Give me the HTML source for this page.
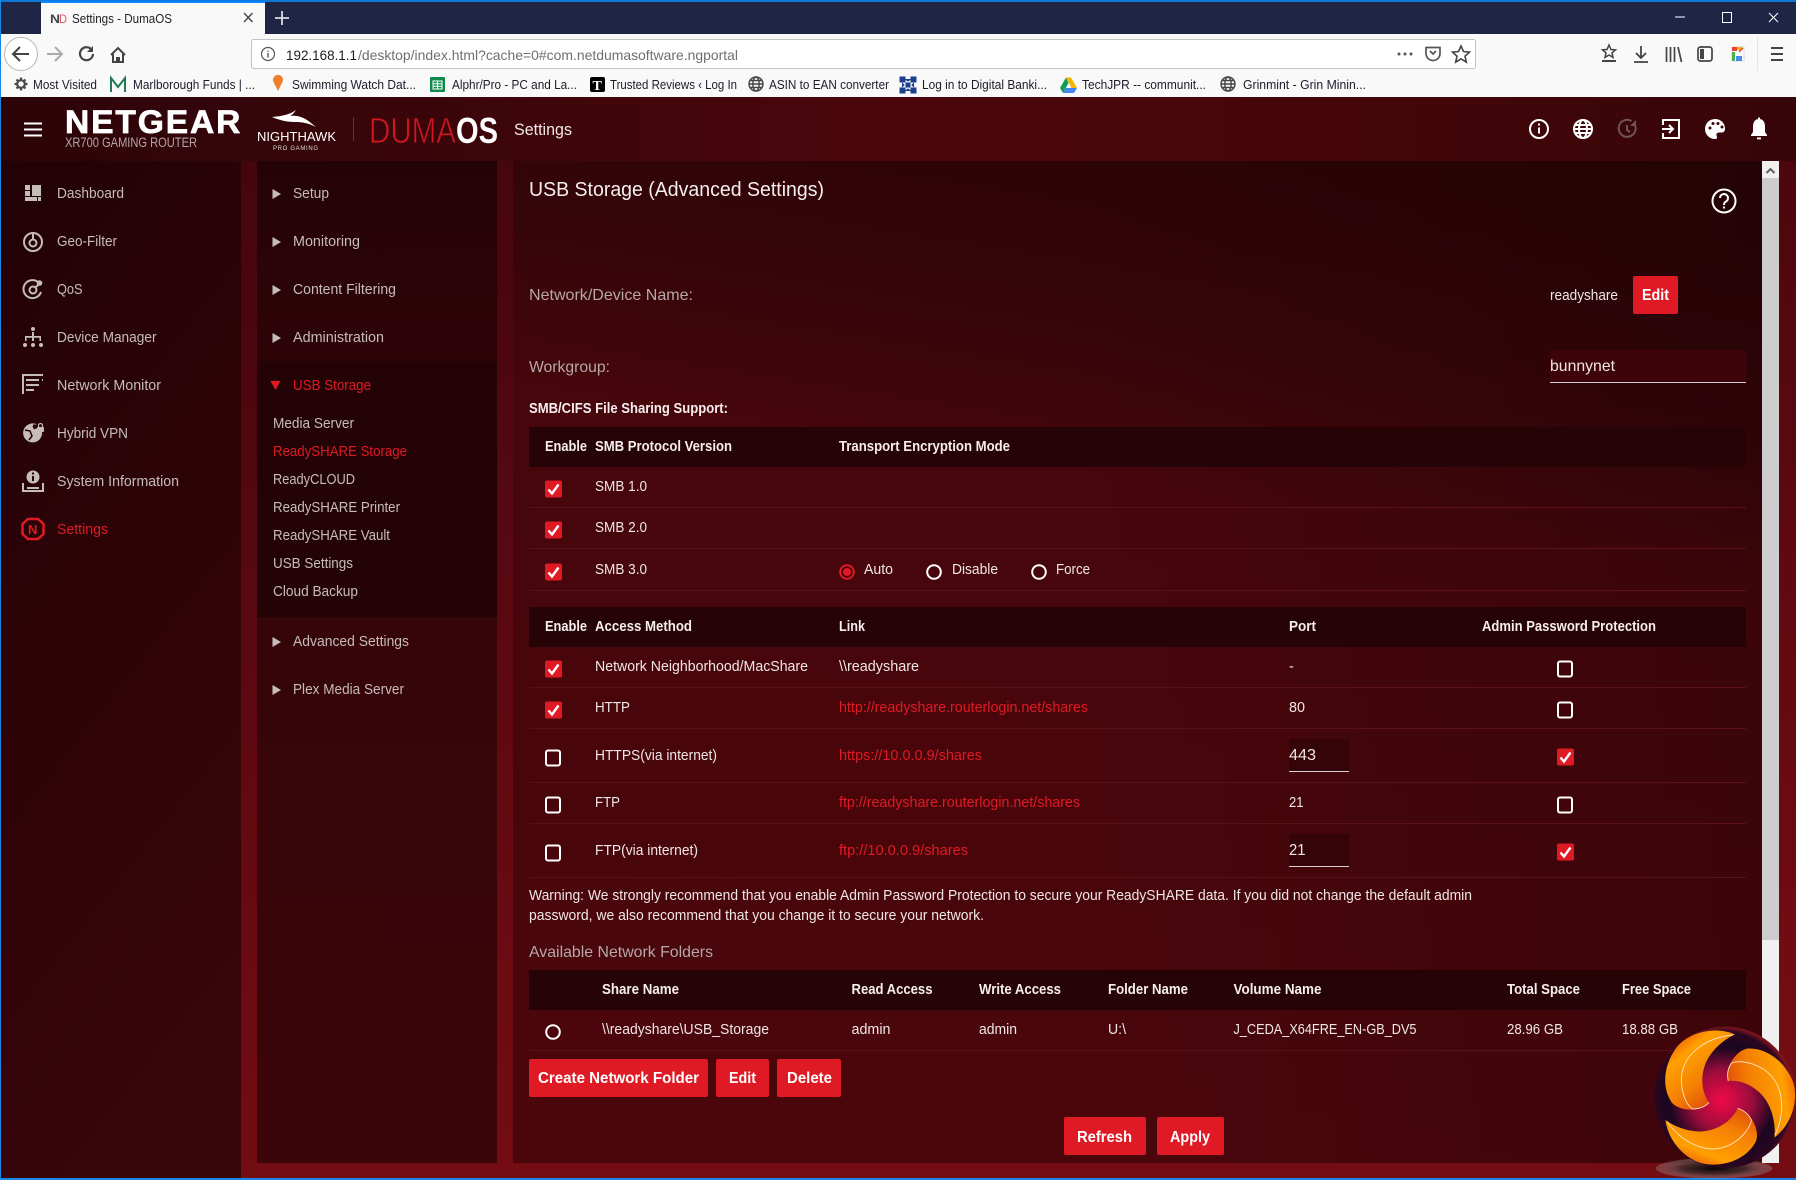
<!DOCTYPE html>
<html lang="en"><head><meta charset="utf-8"><title>Settings - DumaOS</title>
<style>
html,body{margin:0;padding:0;background:#000;width:1796px;height:1180px;overflow:hidden}
svg{display:block}
text{font-family:"Liberation Sans",Arial,sans-serif;font-size:14.5px;fill:#f0e6e6;white-space:pre}
.b{font-size:12.5px;fill:#1c1c2c}
.m{font-size:15px;fill:#c6bcbc}
.r{fill:#e01a25}
.l{font-size:16px;fill:#b5a8a8}
.h{font-weight:bold;fill:#f6eeee}
.w{font-size:16px;font-weight:bold;fill:#fff}
.ic{fill:none;stroke:#c6bcbc;stroke-width:2}
.hi{fill:none;stroke:#fff;stroke-width:2}
.ti{fill:none;stroke:#444;stroke-width:2}
</style></head><body>
<svg xmlns="http://www.w3.org/2000/svg" width="1796" height="1180" viewBox="0 0 1796 1180">
<defs>
<linearGradient id="bg" x1="0" y1="0" x2="0.2" y2="1"><stop offset="0" stop-color="#3f050a"/><stop offset=".45" stop-color="#570810"/><stop offset="1" stop-color="#740c13"/></linearGradient>
<linearGradient id="hd" x1="0" y1="0" x2="1" y2="0"><stop offset="0" stop-color="#2c0408"/><stop offset=".12" stop-color="#33050a"/><stop offset=".5" stop-color="#4a060b"/><stop offset=".78" stop-color="#430609"/><stop offset="1" stop-color="#360509"/></linearGradient>
<linearGradient id="sb" x1="0" y1="0" x2=".3" y2="1"><stop offset="0" stop-color="#210206"/><stop offset=".55" stop-color="#2e0408"/><stop offset="1" stop-color="#37050a"/></linearGradient>
<linearGradient id="mn" x1="0" y1="0" x2="0" y2="1"><stop offset="0" stop-color="#240307"/><stop offset=".3" stop-color="#33050a"/><stop offset="1" stop-color="#3c0509"/></linearGradient>
<linearGradient id="mp" x1=".6" y1="0" x2=".4" y2="1"><stop offset="0" stop-color="#2b0407"/><stop offset=".18" stop-color="#36050a"/><stop offset=".33" stop-color="#46060b"/><stop offset="1" stop-color="#4a060b"/></linearGradient>
<linearGradient id="mo" x1="0" y1="0" x2="1" y2="0"><stop offset=".45" stop-color="#000" stop-opacity="0"/><stop offset="1" stop-color="#000" stop-opacity=".16"/></linearGradient>
<linearGradient id="o1" x1=".1" y1="0" x2=".8" y2="1"><stop offset="0" stop-color="#e8380f"/><stop offset=".28" stop-color="#ffa000"/><stop offset=".62" stop-color="#f58004"/><stop offset="1" stop-color="#d93a0c"/></linearGradient>
<radialGradient id="core" cx=".48" cy=".52" r=".55"><stop offset="0" stop-color="#f00a48"/><stop offset=".38" stop-color="#9c0c3c"/><stop offset=".68" stop-color="#1a0620"/><stop offset=".88" stop-color="#2a0620"/><stop offset="1" stop-color="#c0201a"/></radialGradient>
<radialGradient id="sh"><stop offset="0" stop-color="#000" stop-opacity=".95"/><stop offset=".55" stop-color="#333" stop-opacity=".7"/><stop offset="1" stop-color="#bbb" stop-opacity=".25"/></radialGradient>
<g id="on"><rect y="-.5" width="17" height="17" rx="2" fill="#e01a25"/><path d="M3.500 8.500l3.500 4 6.500-9" fill="none" stroke="#fff" stroke-width="2.400"/></g>
<g id="off"><rect x="1" y="1.500" width="14" height="15" rx="2" fill="none" stroke="#fff" stroke-width="2"/></g>
<g id="rd"><circle cx="8" cy="8" r="6.800" fill="none" stroke="#fff" stroke-width="2"/></g>
<g id="blob"><path d="M702 166C640 140 560 160 525 210C490 260 485 325 515 368C540 395 600 395 625 368C595 325 600 262 632 222C650 198 675 178 702 166Z" fill="url(#o1)"/><path d="M696 168C630 172 548 215 543 295C542 335 556 372 575 386C595 388 612 380 625 368" fill="none" stroke="#ffe9c8" stroke-width="2.500"/></g>
<g id="globe" fill="none" stroke="#444" stroke-width="1.400"><circle cx="8" cy="8" r="7"/><ellipse cx="8" cy="8" rx="3.200" ry="7"/><path d="M1 8h14M2 4.500h12M2 11.500h12"/></g>
</defs>

<!-- browser chrome -->
<rect width="1796" height="34" fill="#1f2544"/>
<rect width="1796" height="2" fill="#0f78d4"/>
<rect x="0" width="1" height="1180" fill="#1a86e8"/>
<rect x="41" y="2" width="224" height="32" fill="#f9f9f9"/>
<rect x="41" y="1" width="224" height="2" fill="#0a84ff"/>
<text x="50" y="23" style="font-size:12px;font-weight:bold;fill:#444" textLength="10" lengthAdjust="spacingAndGlyphs">N</text><text x="59" y="23" style="font-size:12px;fill:#d8565c" textLength="8" lengthAdjust="spacingAndGlyphs">D</text>
<text x="72" y="23" style="font-size:13px;fill:#222" textLength="100" lengthAdjust="spacingAndGlyphs">Settings - DumaOS</text>
<path d="M244 13l8.500 9M252.500 13l-8.500 9" stroke="#444" stroke-width="1.400"/>
<path d="M282 11v14M275 18h14" stroke="#ddd" stroke-width="1.800"/>
<path d="M1675 17h10" stroke="#fff" stroke-width="1"/><rect x="1722.500" y="12.500" width="9" height="10" fill="none" stroke="#fff"/><path d="M1769 13l9 9M1778 13l-9 9" stroke="#fff" stroke-width="1"/>
<rect x="1" y="34" width="1795" height="63" fill="#f9f9f9"/>
<circle cx="21" cy="54" r="16.500" fill="#fff" stroke="#b5b5b5" stroke-width="1"/>
<path d="M29 54H14M20 47l-7 7 7 7" fill="none" stroke="#444" stroke-width="2"/>
<path d="M62 54H47M55 47l7 7-7 7" fill="none" stroke="#aaa" stroke-width="2"/>
<path d="M93 54a6.500 6.500 0 1 1-2-5" fill="none" stroke="#444" stroke-width="2.200"/><path d="M93 46v6h-6z" fill="#444"/>
<path d="M111 55l7-7 7 7M113 54v8h4v-4h2v4h4v-8" fill="none" stroke="#444" stroke-width="2"/>
<rect x="251.500" y="39.500" width="1224" height="29" rx="2" fill="#fff" stroke="#c3c3c3"/>
<circle cx="268" cy="54" r="6.500" fill="none" stroke="#555" stroke-width="1.200"/><path d="M268 53v4.500M268 50.500v1.200" stroke="#555" stroke-width="1.400"/>
<text x="286" y="60" style="font-size:14px;fill:#1c1c1c" textLength="71" lengthAdjust="spacingAndGlyphs">192.168.1.1</text>
<text x="358" y="60" style="font-size:14px;fill:#6f6f6f" textLength="380" lengthAdjust="spacingAndGlyphs">/desktop/index.html?cache=0#com.netdumasoftware.ngportal</text>
<circle cx="1399" cy="54" r="1.500" fill="#555"/><circle cx="1405" cy="54" r="1.500" fill="#555"/><circle cx="1411" cy="54" r="1.500" fill="#555"/>
<path d="M1426 47.500h14v6a7 7 0 0 1-14 0zM1430 51l3 3 3-3" fill="none" stroke="#555" stroke-width="1.700"/>
<path d="M1461 46l2.500 5.500 6 .6-4.500 4 1.300 6-5.300-3.200-5.300 3.200 1.300-6-4.500-4 6-.6z" fill="none" stroke="#444" stroke-width="1.600"/>
<path d="M1609 45l2 4.500 4.500.4-3.500 3 1 4.500-4-2.400-4 2.400 1-4.500-3.500-3 4.500-.4z" fill="none" stroke="#444" stroke-width="1.500"/><path d="M1602 61h14" stroke="#444" stroke-width="2"/>
<path d="M1641 46v12M1636 53l5 5 5-5M1634 62h14" fill="none" stroke="#444" stroke-width="1.800"/>
<path d="M1666.500 47v15M1670.500 47v15M1674.500 47v15M1678 47l3.500 15" fill="none" stroke="#444" stroke-width="1.700"/>
<rect x="1698" y="47" width="14" height="14" rx="2.500" fill="none" stroke="#444" stroke-width="1.700"/><rect x="1700" y="49" width="4" height="10" fill="#444"/>
<rect x="1732" y="47" width="12" height="14" fill="#fff" stroke="#d8d8d8"/><rect x="1732" y="47" width="5" height="4" fill="#e8443a"/><rect x="1737" y="47" width="5" height="3" fill="#f0b400"/><rect x="1732" y="52" width="3" height="9" fill="#4caf50"/><rect x="1736" y="56" width="6" height="5" fill="#3f8ef0"/><path d="M1739 52l4-4" stroke="#e8443a" stroke-width="1.500"/>
<rect x="1757" y="37" width="1" height="34" fill="#e6e6e6"/>
<path d="M1771 48h12M1771 54h12M1771 60h12" stroke="#444" stroke-width="2"/>

<!-- bookmarks -->
<circle cx="21" cy="84" r="3.800" fill="none" stroke="#4a4a4a" stroke-width="2.200"/><path d="M21 77.500v3M21 87.500v3M14.500 84h3M24.500 84h3M16.500 79.500l2 2M23.500 86.500l2 2M25.500 79.500l-2 2M18.500 86.500l-2 2" stroke="#4a4a4a" stroke-width="2.200"/>
<text class="b" x="33" y="89" textLength="64" lengthAdjust="spacingAndGlyphs">Most Visited</text>
<path d="M111 92V78l7 9 7-9v14" fill="none" stroke="#1f7a55" stroke-width="2"/>
<text class="b" x="133" y="89" textLength="122" lengthAdjust="spacingAndGlyphs">Marlborough Funds | ...</text>
<path d="M278 91l-4.500-9a5 5 0 1 1 9 0z" fill="#ef7f2e"/>
<text class="b" x="292" y="89" textLength="124" lengthAdjust="spacingAndGlyphs">Swimming Watch Dat...</text>
<rect x="430" y="77" width="15" height="15" rx="1" fill="#10894a"/><path d="M433 81h9v8h-9zM433 83.700h9M433 86.300h9M437.500 81v8" fill="none" stroke="#fff" stroke-width="1"/>
<text class="b" x="452" y="89" textLength="125" lengthAdjust="spacingAndGlyphs">Alphr/Pro - PC and La...</text>
<rect x="590" y="77" width="15" height="15" rx="2" fill="#000"/><text x="592.500" y="90" style="font-size:14px;font-weight:bold;fill:#fff;font-family:'Liberation Serif',serif">T</text>
<text class="b" x="610" y="89" textLength="127" lengthAdjust="spacingAndGlyphs">Trusted Reviews ‹ Log In</text>
<use href="#globe" x="748" y="76"/>
<text class="b" x="769" y="89" textLength="120" lengthAdjust="spacingAndGlyphs">ASIN to EAN converter</text>
<path d="M900 77h5v5h-5zM911 77h5v5h-5zM900 88h5v5h-5zM911 88h5v5h-5zM906 83h4v4h-4zM905 79l3 2 3-2M905 91l3-2 3 2M902 83l2 2-2 2M914 83l-2 2 2 2" fill="#1d3f8f" stroke="#1d3f8f"/>
<text class="b" x="922" y="89" textLength="125" lengthAdjust="spacingAndGlyphs">Log in to Digital Banki...</text>
<path d="M1063 93h11l3-5h-11z" fill="#4285f4"/><path d="M1066 77.500l-6 10.500 3 5 5.500-10z" fill="#0f9d58"/><path d="M1066 77.500h5l6 10.500h-5.500z" fill="#f4b400"/>
<text class="b" x="1082" y="89" textLength="124" lengthAdjust="spacingAndGlyphs">TechJPR -- communit...</text>
<use href="#globe" x="1220" y="76"/>
<text class="b" x="1243" y="89" textLength="123" lengthAdjust="spacingAndGlyphs">Grinmint - Grin Minin...</text>

<!-- app -->
<rect x="1" y="97" width="1795" height="1081" fill="url(#bg)"/>
<rect x="1" y="97" width="1795" height="64" fill="url(#hd)"/>
<rect x="1" y="161" width="240" height="1017" fill="url(#sb)"/>
<rect x="257" y="161" width="240" height="1002" fill="url(#mn)"/>
<rect x="257" y="361" width="240" height="256" fill="#240307"/>
<rect x="513" y="161" width="1249" height="1002" fill="url(#mp)"/>
<rect x="513" y="161" width="1249" height="1002" fill="url(#mo)"/>
<rect x="1762" y="161" width="17" height="1002" fill="#f0f0f0"/>
<rect x="1762" y="178" width="17" height="762" fill="#cdcdcd"/>
<path d="M1766.500 173l4-4 4 4" fill="none" stroke="#606060" stroke-width="2"/>
<rect x="0" y="1178" width="1796" height="2" fill="#1a86e8"/>

<!-- app header -->
<path d="M24 123.500h18M24 129.500h18M24 135.500h18" stroke="#fff" stroke-width="2"/>
<text transform="translate(65 133) scale(1.05 1)" style="font-size:32px;font-weight:bold;fill:#fff;stroke:#fff;stroke-width:.7" textLength="167" lengthAdjust="spacing">NETGEAR</text>
<text x="65" y="147" style="font-size:13.500px;fill:#b3a5a5" textLength="132" lengthAdjust="spacingAndGlyphs">XR700 GAMING ROUTER</text>
<path d="M272 117c10-1 17-2 24-7-2 3-4 5-6 6 7-1 14 1 21 7l5 4c-8-4-14-5-21-5-9 0-16-2-23-5z" fill="#fff"/>
<text x="257" y="141" style="font-size:13px;fill:#fff" textLength="79" lengthAdjust="spacing">NIGHTHAWK</text>
<text x="273" y="150" style="font-size:6px;fill:#ddd" textLength="45" lengthAdjust="spacing">PRO GAMING</text>
<rect x="353" y="117" width="1" height="24" fill="#6b3236"/>
<text x="369" y="143" style="font-size:36px;fill:#d01822;stroke:#42060a;stroke-width:.9;paint-order:normal" textLength="87" lengthAdjust="spacingAndGlyphs">DUMA</text>
<text x="456" y="143" style="font-size:36px;font-weight:bold;fill:#fff" textLength="42" lengthAdjust="spacingAndGlyphs">OS</text>
<text x="514" y="135" style="font-size:16.500px;fill:#f0e8e8" textLength="58" lengthAdjust="spacingAndGlyphs">Settings</text>

<circle cx="1539" cy="129" r="9" class="hi"/><path d="M1539 127.500v6M1539 123.500v2" stroke="#fff" stroke-width="2"/>
<g class="hi" stroke-width="1.600"><circle cx="1583" cy="129" r="9"/><ellipse cx="1583" cy="129" rx="4" ry="9"/><path d="M1574 129h18M1575 125h16M1575 133h16"/></g>
<g fill="none" stroke="#6f5558" stroke-width="2"><path d="M1635 125a8.500 8.500 0 1 1-3.500-4"/><path d="M1627 125v5l3 2"/></g><path d="M1636 120v6h-6z" fill="#6f5558"/>
<path d="M1663 125v-5h16v18h-16v-5" fill="none" stroke="#fff" stroke-width="2"/><path d="M1662 129h10M1669 125l4 4-4 4" fill="none" stroke="#fff" stroke-width="2"/>
<path d="M1715 119a10 10 0 0 0 0 20c3 0 2-2 1.500-3.500-.5-2 1-3 3-3h2.500c2 0 3-2 3-4 0-5.500-4.500-9.500-10-9.500z" fill="#fff"/><circle cx="1710" cy="128" r="1.500" fill="#3a0509"/><circle cx="1713" cy="123.500" r="1.500" fill="#3a0509"/><circle cx="1718" cy="123.500" r="1.500" fill="#3a0509"/><circle cx="1722" cy="127" r="1.500" fill="#3a0509"/>
<path d="M1759 119c4 0 6 3 6 8v5l2 3v1h-16v-1l2-3v-5c0-5 2-8 6-8z" fill="#fff"/><rect x="1757" y="137.500" width="4" height="1.800" fill="#fff"/><rect x="1758" y="117.500" width="2" height="3" fill="#fff"/>

<!-- sidebar icons -->
<g fill="#c6bcbc"><rect x="32" y="185" width="9" height="11"/><rect x="25" y="185" width="5" height="5"/><rect x="25" y="191" width="5" height="5"/><rect x="25" y="197" width="12" height="4"/><rect x="38" y="197" width="3" height="4"/></g>
<circle cx="33" cy="242" r="9" class="ic"/><circle cx="33" cy="243" r="3.500" class="ic"/><path d="M33 233v6" class="ic" stroke-width="3"/>
<path d="M38 282a9 9 0 1 0 3 10" class="ic"/><circle cx="33" cy="290" r="3.500" class="ic"/><path d="M35 288l4-4" class="ic"/><circle cx="39.500" cy="283" r="2.800" fill="#c6bcbc"/>
<g fill="#c6bcbc"><circle cx="33" cy="329" r="2"/><circle cx="25" cy="345" r="2"/><circle cx="33" cy="345" r="2"/><circle cx="41" cy="345" r="2"/><path d="M32 332h2v4h7v5h-1.500v-3.300h-5.500v3.300h-2v-3.300h-5.500v3.300H25v-5h7z"/></g>
<path d="M23 394v-19h20M26 380h13M26 385h13M26 390h8M42 380h1" class="ic"/>
<path d="M37 424.500a9.500 9.500 0 1 0 5 7h-5v-3h-4v-4z" fill="#c6bcbc"/><path d="M25 430l5 1 2 5-3 4M33 426l2 3" stroke="#240307" stroke-width="1.500" fill="none"/><rect x="37" y="427" width="7" height="5" rx="1" fill="#c6bcbc"/><path d="M38.500 427v-1.500a2 2 0 0 1 4 0v1.500" fill="none" stroke="#c6bcbc" stroke-width="1.200"/>
<circle cx="33" cy="477" r="6.500" fill="#c6bcbc"/><path d="M33 476v5M33 472.500v2" stroke="#240307" stroke-width="2"/><path d="M23 483v8h20v-8M27 488h12" class="ic"/>
<path d="M28 519h10l5.500 5v10L38 539H28l-5.500-5V524z" fill="none" stroke="#e01a25" stroke-width="2.500"/><text x="28" y="534" style="font-size:13px;font-weight:bold;fill:#e01a25">N</text>

<!-- sidebar text -->
<text class="m" x="57" y="198" textLength="67" lengthAdjust="spacingAndGlyphs">Dashboard</text>
<text class="m" x="57" y="246" textLength="60" lengthAdjust="spacingAndGlyphs">Geo-Filter</text>
<text class="m" x="57" y="294" textLength="25.500" lengthAdjust="spacingAndGlyphs">QoS</text>
<text class="m" x="57" y="342" textLength="99.500" lengthAdjust="spacingAndGlyphs">Device Manager</text>
<text class="m" x="57" y="390" textLength="104" lengthAdjust="spacingAndGlyphs">Network Monitor</text>
<text class="m" x="57" y="438" textLength="71" lengthAdjust="spacingAndGlyphs">Hybrid VPN</text>
<text class="m" x="57" y="486" textLength="122" lengthAdjust="spacingAndGlyphs">System Information</text>
<text class="m r" x="57" y="534" textLength="51" lengthAdjust="spacingAndGlyphs" style="fill:#e01a25">Settings</text>

<!-- menu -->
<g fill="#c6bcbc"><path d="M272.500 189v10l8.500-5zM272.500 237v10l8.500-5zM272.500 285v10l8.500-5zM272.500 333v10l8.500-5zM272.500 637v10l8.500-5zM272.500 685v10l8.500-5z"/></g>
<path d="M270.500 381h10l-5 9z" fill="#e01a25"/>
<text class="m" x="293" y="198" textLength="36" lengthAdjust="spacingAndGlyphs">Setup</text>
<text class="m" x="293" y="246" textLength="67" lengthAdjust="spacingAndGlyphs">Monitoring</text>
<text class="m" x="293" y="294" textLength="103" lengthAdjust="spacingAndGlyphs">Content Filtering</text>
<text class="m" x="293" y="342" textLength="91" lengthAdjust="spacingAndGlyphs">Administration</text>
<text class="m" x="293" y="390" textLength="78" lengthAdjust="spacingAndGlyphs" style="fill:#e01a25">USB Storage</text>
<text class="m" x="273" y="428" textLength="81" lengthAdjust="spacingAndGlyphs">Media Server</text>
<text class="m" x="273" y="456" textLength="134" lengthAdjust="spacingAndGlyphs" style="fill:#e01a25">ReadySHARE Storage</text>
<text class="m" x="273" y="484" textLength="82" lengthAdjust="spacingAndGlyphs">ReadyCLOUD</text>
<text class="m" x="273" y="512" textLength="127" lengthAdjust="spacingAndGlyphs">ReadySHARE Printer</text>
<text class="m" x="273" y="540" textLength="117" lengthAdjust="spacingAndGlyphs">ReadySHARE Vault</text>
<text class="m" x="273" y="568" textLength="80" lengthAdjust="spacingAndGlyphs">USB Settings</text>
<text class="m" x="273" y="596" textLength="85" lengthAdjust="spacingAndGlyphs">Cloud Backup</text>
<text class="m" x="293" y="646" textLength="116" lengthAdjust="spacingAndGlyphs">Advanced Settings</text>
<text class="m" x="293" y="694" textLength="111" lengthAdjust="spacingAndGlyphs">Plex Media Server</text>

<!-- main -->
<text x="529" y="196" style="font-size:20.500px;fill:#f5eeee" textLength="295" lengthAdjust="spacingAndGlyphs">USB Storage (Advanced Settings)</text>
<circle cx="1724" cy="201" r="11.500" class="hi" stroke-width="2.200"/>
<path d="M1720 198a4 4 0 1 1 6 3.500c-1.500.8-2 1.500-2 3.500" fill="none" stroke="#fff" stroke-width="2"/><rect x="1723" y="206.500" width="2" height="2" fill="#fff"/>
<text class="l" x="529" y="300" textLength="164" lengthAdjust="spacingAndGlyphs">Network/Device Name:</text>
<text x="1550" y="300" textLength="68" lengthAdjust="spacingAndGlyphs">readyshare</text>
<rect x="1633" y="276" width="45" height="38" rx="2" fill="#e01a25"/>
<text class="w" x="1642" y="300" textLength="27" lengthAdjust="spacingAndGlyphs">Edit</text>
<text class="l" x="529" y="372" textLength="81" lengthAdjust="spacingAndGlyphs">Workgroup:</text>
<rect x="1550" y="350" width="196" height="32" fill="#3f0409"/><rect x="1550" y="382" width="196" height="1" fill="#d8d0d0"/>
<text x="1550" y="371" style="font-size:16px" textLength="65" lengthAdjust="spacingAndGlyphs">bunnynet</text>
<text class="h" x="529" y="413" textLength="199" lengthAdjust="spacingAndGlyphs">SMB/CIFS File Sharing Support:</text>

<rect x="529" y="427" width="1217" height="40" fill="#260306"/>
<text class="h" x="545" y="451" textLength="42" lengthAdjust="spacingAndGlyphs">Enable</text>
<text class="h" x="595" y="451" textLength="137" lengthAdjust="spacingAndGlyphs">SMB Protocol Version</text>
<text class="h" x="839" y="451" textLength="171" lengthAdjust="spacingAndGlyphs">Transport Encryption Mode</text>
<g fill="#5a1116"><rect x="529" y="507" width="1217" height="1"/><rect x="529" y="548" width="1217" height="1"/><rect x="529" y="590" width="1217" height="1"/></g>
<use href="#on" x="545" y="481"/><use href="#on" x="545" y="522"/><use href="#on" x="545" y="564"/>
<text x="595" y="491" textLength="52" lengthAdjust="spacingAndGlyphs">SMB 1.0</text>
<text x="595" y="532" textLength="52" lengthAdjust="spacingAndGlyphs">SMB 2.0</text>
<text x="595" y="574" textLength="52" lengthAdjust="spacingAndGlyphs">SMB 3.0</text>
<circle cx="847" cy="572" r="6.800" fill="none" stroke="#e01a25" stroke-width="2"/><circle cx="847" cy="572" r="4" fill="#e01a25"/>
<text x="864" y="574" textLength="29" lengthAdjust="spacingAndGlyphs">Auto</text>
<use href="#rd" x="926" y="564"/>
<text x="952" y="574" textLength="46" lengthAdjust="spacingAndGlyphs">Disable</text>
<use href="#rd" x="1031" y="564"/>
<text x="1056" y="574" textLength="34" lengthAdjust="spacingAndGlyphs">Force</text>

<rect x="529" y="607" width="1217" height="40" fill="#260306"/>
<text class="h" x="545" y="631" textLength="42" lengthAdjust="spacingAndGlyphs">Enable</text>
<text class="h" x="595" y="631" textLength="97" lengthAdjust="spacingAndGlyphs">Access Method</text>
<text class="h" x="839" y="631" textLength="26" lengthAdjust="spacingAndGlyphs">Link</text>
<text class="h" x="1289" y="631" textLength="27" lengthAdjust="spacingAndGlyphs">Port</text>
<text class="h" x="1482" y="631" textLength="174" lengthAdjust="spacingAndGlyphs">Admin Password Protection</text>
<g fill="#5a1116"><rect x="529" y="687" width="1217" height="1"/><rect x="529" y="728" width="1217" height="1"/><rect x="529" y="782" width="1217" height="1"/><rect x="529" y="823" width="1217" height="1"/><rect x="529" y="877" width="1217" height="1"/></g>
<use href="#on" x="545" y="661"/><use href="#on" x="545" y="702"/><use href="#off" x="545" y="749"/><use href="#off" x="545" y="796"/><use href="#off" x="545" y="844"/>
<use href="#off" x="1557" y="660"/><use href="#off" x="1557" y="701"/><use href="#on" x="1557" y="749"/><use href="#off" x="1557" y="796"/><use href="#on" x="1557" y="844"/>
<text x="595" y="671" textLength="213" lengthAdjust="spacingAndGlyphs">Network Neighborhood/MacShare</text>
<text x="839" y="671" textLength="80" lengthAdjust="spacingAndGlyphs">\\readyshare</text>
<text x="1289" y="671">-</text>
<text x="595" y="712" textLength="35" lengthAdjust="spacingAndGlyphs">HTTP</text>
<text class="r" x="839" y="712" textLength="249" lengthAdjust="spacingAndGlyphs" style="fill:#e01a25">http://readyshare.routerlogin.net/shares</text>
<text x="1289" y="712" textLength="16" lengthAdjust="spacingAndGlyphs">80</text>
<text x="595" y="760" textLength="122" lengthAdjust="spacingAndGlyphs">HTTPS(via internet)</text>
<text x="839" y="760" textLength="143" lengthAdjust="spacingAndGlyphs" style="fill:#e01a25">https://10.0.0.9/shares</text>
<rect x="1289" y="739" width="60" height="32" fill="#350408"/><rect x="1289" y="771" width="60" height="1" fill="#d8d0d0"/>
<text x="1289" y="760" style="font-size:16px" textLength="27" lengthAdjust="spacingAndGlyphs">443</text>
<text x="595" y="807" textLength="25" lengthAdjust="spacingAndGlyphs">FTP</text>
<text x="839" y="807" textLength="241" lengthAdjust="spacingAndGlyphs" style="fill:#e01a25">ftp://readyshare.routerlogin.net/shares</text>
<text x="1289" y="807" textLength="14.500" lengthAdjust="spacingAndGlyphs">21</text>
<text x="595" y="855" textLength="103" lengthAdjust="spacingAndGlyphs">FTP(via internet)</text>
<text x="839" y="855" textLength="129" lengthAdjust="spacingAndGlyphs" style="fill:#e01a25">ftp://10.0.0.9/shares</text>
<rect x="1289" y="834" width="60" height="32" fill="#350408"/><rect x="1289" y="866" width="60" height="1" fill="#d8d0d0"/>
<text x="1289" y="855" style="font-size:16px" textLength="16.500" lengthAdjust="spacingAndGlyphs">21</text>
<text x="529" y="900" textLength="943" lengthAdjust="spacingAndGlyphs">Warning: We strongly recommend that you enable Admin Password Protection to secure your ReadySHARE data. If you did not change the default admin</text>
<text x="529" y="920" textLength="455" lengthAdjust="spacingAndGlyphs">password, we also recommend that you change it to secure your network.</text>
<text class="l" x="529" y="957" textLength="184" lengthAdjust="spacingAndGlyphs">Available Network Folders</text>

<rect x="529" y="970" width="1217" height="40" fill="#260306"/>
<text class="h" x="602" y="994" textLength="77" lengthAdjust="spacingAndGlyphs">Share Name</text>
<text class="h" x="851.500" y="994" textLength="81" lengthAdjust="spacingAndGlyphs">Read Access</text>
<text class="h" x="979" y="994" textLength="82" lengthAdjust="spacingAndGlyphs">Write Access</text>
<text class="h" x="1108" y="994" textLength="80" lengthAdjust="spacingAndGlyphs">Folder Name</text>
<text class="h" x="1233.500" y="994" textLength="88" lengthAdjust="spacingAndGlyphs">Volume Name</text>
<text class="h" x="1507" y="994" textLength="73" lengthAdjust="spacingAndGlyphs">Total Space</text>
<text class="h" x="1622" y="994" textLength="69" lengthAdjust="spacingAndGlyphs">Free Space</text>
<use href="#rd" x="545" y="1024"/>
<text x="602" y="1034" textLength="167" lengthAdjust="spacingAndGlyphs">\\readyshare\USB_Storage</text>
<text x="851.500" y="1034" textLength="39" lengthAdjust="spacingAndGlyphs">admin</text>
<text x="979" y="1034" textLength="38" lengthAdjust="spacingAndGlyphs">admin</text>
<text x="1108" y="1034" textLength="18" lengthAdjust="spacingAndGlyphs">U:\</text>
<text x="1233.500" y="1034" textLength="183" lengthAdjust="spacingAndGlyphs">J_CEDA_X64FRE_EN-GB_DV5</text>
<text x="1507" y="1034" textLength="56" lengthAdjust="spacingAndGlyphs">28.96 GB</text>
<text x="1622" y="1034" textLength="56" lengthAdjust="spacingAndGlyphs">18.88 GB</text>
<rect x="529" y="1050" width="1217" height="1" fill="#5a1116"/>

<g fill="#e01a25"><rect x="529" y="1059" width="179" height="38" rx="2"/><rect x="716" y="1059" width="53" height="38" rx="2"/><rect x="777" y="1059" width="64" height="38" rx="2"/><rect x="1064" y="1117" width="82" height="38" rx="2"/><rect x="1157" y="1117" width="67" height="38" rx="2"/></g>
<text class="w" x="538" y="1083" textLength="161" lengthAdjust="spacingAndGlyphs">Create Network Folder</text>
<text class="w" x="729" y="1083" textLength="27" lengthAdjust="spacingAndGlyphs">Edit</text>
<text class="w" x="787" y="1083" textLength="45" lengthAdjust="spacingAndGlyphs">Delete</text>
<text class="w" x="1077" y="1142" textLength="55" lengthAdjust="spacingAndGlyphs">Refresh</text>
<text class="w" x="1170" y="1142" textLength="40" lengthAdjust="spacingAndGlyphs">Apply</text>

<!-- logo -->
<svg x="1500" y="980" width="296" height="200" viewBox="0 0 888 600">
<ellipse cx="642" cy="565" rx="175" ry="31" fill="url(#sh)"/>
<g transform="translate(675 352) scale(1.015) translate(-672 -352)">
<circle cx="672" cy="352" r="209" fill="url(#core)"/>
<use href="#blob"/>
<use href="#blob" transform="rotate(120 672 352)"/>
<use href="#blob" transform="rotate(240 672 352)"/>
</g>
</svg>
</svg>
</body></html>
